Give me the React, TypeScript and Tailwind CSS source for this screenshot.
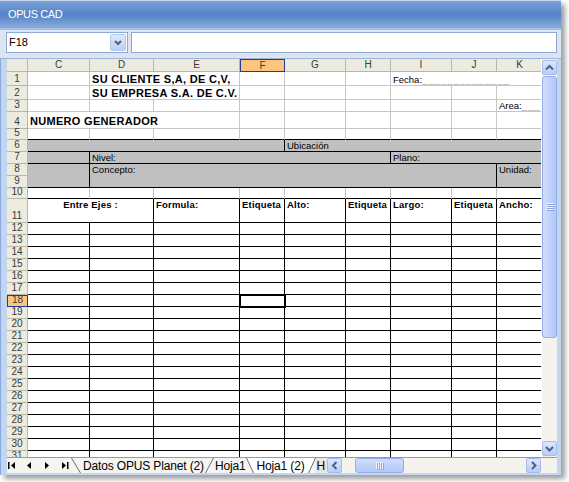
import React from 'react';

const font = "font-['Liberation_Sans',Arial,sans-serif]";

// cell border presets
const LIGHT = 'border-r border-b border-[#c6c6c6]';
const LIGHT_K = 'border-b border-[#c6c6c6]';
const LIGHT_BB = 'border-r border-b border-r-[#c6c6c6] border-b-black';
const LIGHT_BB_K = 'border-b border-b-black';
const BLACK = 'border-r border-b border-black';
const BLACK_K = 'border-b border-black';
const GRAY = 'bg-[#c0c0c0] border-r border-b border-black';
const GRAY_K = 'bg-[#c0c0c0] border-b border-black';

const txt = 'text-[9.5px] leading-none text-black';
const title = 'text-[11px] font-bold tracking-[0.3px] leading-none text-black';
const head = 'text-[9.5px] font-bold tracking-[0.2px] leading-none text-black';
const blank = 'text-[#a6a6a6] tracking-[1px]';

const cols = ['C', 'D', 'E', 'F', 'G', 'H', 'I', 'J', 'K'];
const bodyRows = Array.from({ length: 20 }, (_, i) => i + 12);

const Cell: React.FC<{ cls: string; children?: React.ReactNode }> = ({ cls, children }) => (
    <div className={`flex overflow-hidden whitespace-nowrap ${cls}`}>{children}</div>
);

const RowHead: React.FC<{ n: number; sel?: boolean }> = ({ n, sel }) => (
    <div
        className={`flex items-end justify-center pb-px text-[10px] leading-none text-[#3a3a3a] ${
            sel ? 'bg-[#fcc57d] border border-[#1f3d98]' : 'bg-[#ecebe0] border-r border-b border-[#b9b7a8]'
        }`}
    >
        {n}
    </div>
);

const ArrowBtn: React.FC<{ dir: 'up' | 'down' | 'left' | 'right' }> = ({ dir }) => {
    const d = {
        up: 'M4 9.5 L7.5 6 L11 9.5',
        down: 'M4 6 L7.5 9.5 L11 6',
        left: 'M9.5 4 L6 7.5 L9.5 11',
        right: 'M6 4 L9.5 7.5 L6 11',
    }[dir];
    return (
        <div className="w-[15px] h-[15px] shrink-0 rounded-[2px] border border-[#a5bbec] bg-gradient-to-b from-[#dde7fe] to-[#b8ccf8] flex items-center justify-center">
            <svg width="13" height="13" viewBox="1 1 13 13">
                <path d={d} fill="none" stroke="#4d6185" strokeWidth="2" />
            </svg>
        </div>
    );
};

const Spreadsheet: React.FC = () => (
    <div className="w-[536px] h-[398px] overflow-hidden bg-white">
        <div className="grid grid-cols-[21px_62px_64px_86px_45px_61px_45px_61px_45px_46px] grid-rows-[13px_14px_14px_12px_17px_11px_12px_12px_12px_12px_11px_24px_repeat(20,12px)]">
            {/* column headers */}
            <div className="bg-[#ecebe0] border-r border-b border-[#b9b7a8]" />
            {cols.map((c) => (
                <div
                    key={c}
                    className={`flex items-center justify-center text-[10px] leading-none text-[#3a3a3a] ${
                        c === 'F'
                            ? 'bg-[#fcc57d] border border-[#1f3d98]'
                            : 'bg-[#ecebe0] border-r border-b border-[#b9b7a8]'
                    }`}
                >
                    {c}
                </div>
            ))}

            {/* 1 */}
            <RowHead n={1} />
            <Cell cls={LIGHT} />
            <Cell cls={`col-span-2 items-end pl-[2px] ${LIGHT}`}>
                <span className={title}>SU CLIENTE S,A, DE C,V,</span>
            </Cell>
            <Cell cls={LIGHT} />
            <Cell cls={LIGHT} />
            <Cell cls={LIGHT} />
            <Cell cls={`col-span-3 items-end pl-[2px] pb-px ${LIGHT_K}`}>
                <span className={txt}>
                    Fecha:<span className={blank}>______________</span>
                </span>
            </Cell>

            {/* 2 */}
            <RowHead n={2} />
            <Cell cls={LIGHT} />
            <Cell cls={`col-span-2 items-end pl-[2px] ${LIGHT}`}>
                <span className={title}>SU EMPRESA S.A. DE C.V.</span>
            </Cell>
            <Cell cls={LIGHT} />
            <Cell cls={LIGHT} />
            <Cell cls={LIGHT} />
            <Cell cls={LIGHT} />
            <Cell cls={LIGHT} />
            <Cell cls={LIGHT_K} />

            {/* 3 */}
            <RowHead n={3} />
            {cols.slice(0, 8).map((c) => (
                <Cell key={c} cls={LIGHT} />
            ))}
            <Cell cls={`items-end pl-[2px] pb-px ${LIGHT_K}`}>
                <span className={txt}>
                    Area:<span className={blank}>___</span>
                </span>
            </Cell>

            {/* 4 */}
            <RowHead n={4} />
            <Cell cls={`col-span-3 items-end pl-[2px] pb-px ${LIGHT}`}>
                <span className={title}>NUMERO GENERADOR</span>
            </Cell>
            {cols.slice(3, 8).map((c) => (
                <Cell key={c} cls={LIGHT} />
            ))}
            <Cell cls={LIGHT_K} />

            {/* 5 */}
            <RowHead n={5} />
            {cols.slice(0, 8).map((c) => (
                <Cell key={c} cls={LIGHT_BB} />
            ))}
            <Cell cls={LIGHT_BB_K} />

            {/* 6 */}
            <RowHead n={6} />
            <Cell cls={`col-span-4 ${GRAY}`} />
            <Cell cls={`col-span-5 items-end pl-[2px] pb-px ${GRAY_K}`}>
                <span className={txt}>Ubicación</span>
            </Cell>

            {/* 7 */}
            <RowHead n={7} />
            <Cell cls={GRAY} />
            <Cell cls={`col-span-5 items-end pl-[2px] pb-px ${GRAY}`}>
                <span className={txt}>Nivel:</span>
            </Cell>
            <Cell cls={`col-span-3 items-end pl-[2px] pb-px ${GRAY_K}`}>
                <span className={txt}>Plano:</span>
            </Cell>

            {/* 8-9 */}
            <RowHead n={8} />
            <Cell cls={`row-span-2 ${GRAY}`} />
            <Cell cls={`col-span-7 row-span-2 items-start pl-[2px] pt-[1px] ${GRAY}`}>
                <span className={txt}>Concepto:</span>
            </Cell>
            <Cell cls={`row-span-2 items-start pl-[2px] pt-[1px] ${GRAY_K}`}>
                <span className={txt}>Unidad:</span>
            </Cell>
            <RowHead n={9} />

            {/* 10 */}
            <RowHead n={10} />
            {cols.slice(0, 8).map((c) => (
                <Cell key={c} cls={LIGHT_BB} />
            ))}
            <Cell cls={LIGHT_BB_K} />

            {/* 11 */}
            <RowHead n={11} />
            <Cell cls={`col-span-2 items-start justify-center pt-px ${BLACK}`}>
                <span className={head}>Entre Ejes :</span>
            </Cell>
            {['Formula:', 'Etiqueta', 'Alto:', 'Etiqueta', 'Largo:', 'Etiqueta'].map((h, i) => (
                <Cell key={i} cls={`items-start pl-[2px] pt-px ${BLACK}`}>
                    <span className={head}>{h}</span>
                </Cell>
            ))}
            <Cell cls={`items-start pl-[2px] pt-px ${BLACK_K}`}>
                <span className={head}>Ancho:</span>
            </Cell>

            {/* 12-31 */}
            {bodyRows.map((r) => (
                <React.Fragment key={r}>
                    <RowHead n={r} sel={r === 18} />
                    {cols.map((c) => (
                        <div key={c} className={`relative ${c === 'K' ? BLACK_K : BLACK}`}>
                            {r === 18 && c === 'F' && (
                                <div className="absolute -left-px -top-px w-[47px] h-[14px] border border-black bg-white">
                                    <div className="w-full h-full border border-black" />
                                </div>
                            )}
                        </div>
                    ))}
                </React.Fragment>
            ))}
        </div>
    </div>
);

const VScroll: React.FC = () => (
    <div className="w-[15px] h-[398px] flex flex-col items-center bg-[#f4f3ee] pt-px pb-px">
        <ArrowBtn dir="up" />
        <div className="mt-px w-[15px] h-[262px] rounded-[3px] border border-[#94aee8] bg-gradient-to-r from-[#cfdcfd] to-[#b3c8f6] flex items-center justify-center">
            <svg width="8" height="8" viewBox="0 0 8 8">
                {[0, 2, 4, 6].map((y) => (
                    <React.Fragment key={y}>
                        <rect x="0" y={y} width="7" height="1" fill="#eef3fe" />
                        <rect x="1" y={y + 1} width="7" height="1" fill="#8ca7e0" />
                    </React.Fragment>
                ))}
            </svg>
        </div>
        <div className="flex-1" />
        <ArrowBtn dir="down" />
    </div>
);

const NavArrows: React.FC = () => (
    <svg width="64" height="15" viewBox="0 0 64 15" className="shrink-0">
        <rect x="1" y="4" width="1.5" height="7" fill="#000" />
        <polygon points="8,4 4,7.5 8,11" fill="#000" />
        <polygon points="24,4 20,7.5 24,11" fill="#000" />
        <polygon points="38,4 42,7.5 38,11" fill="#000" />
        <polygon points="55,4 59,7.5 55,11" fill="#000" />
        <rect x="60" y="4" width="1.5" height="7" fill="#000" />
    </svg>
);

const Slant: React.FC<{ dir: 'back' | 'fwd'; w: number; fill?: boolean }> = ({ dir, w, fill }) => (
    <svg width={w} height="15" viewBox={`0 0 ${w} 15`} className="shrink-0">
        {fill && (
            <polygon
                points={dir === 'back' ? `0,0 ${w},0 ${w},15` : `0,0 ${w},0 0,15`}
                fill="#ffffff"
            />
        )}
        <line
            x1={0.5}
            y1={dir === 'back' ? 0 : 15}
            x2={w - 0.5}
            y2={dir === 'back' ? 15 : 0}
            stroke="#6e6e6e"
            strokeWidth="1"
        />
    </svg>
);

const TabBar: React.FC = () => (
    <div className="h-[16px] flex border-t border-[#9a9a9a] bg-[#f4f4f1]">
        <div className="w-[321px] h-[15px] flex items-center overflow-hidden whitespace-nowrap text-[12px] leading-none tracking-[-0.15px] text-black">
            <NavArrows />
            <Slant dir="back" w={10} />
            <span className="shrink-0 pl-[2px] pr-px">Datos OPUS Planet (2)</span>
            <Slant dir="fwd" w={9} />
            <span className="shrink-0 pl-px">Hoja1</span>
            <Slant dir="back" w={8} fill />
            <span className="shrink-0 h-full flex items-center bg-white pl-[3px] pr-[3px]">Hoja1 (2)</span>
            <Slant dir="fwd" w={8} fill />
            <span className="shrink-0 h-full flex items-center bg-[#e6e6e2] border-r border-[#9a9a9a] pl-px pr-[2px]">H</span>
        </div>
        <div className="w-[215px] h-[15px] flex items-center bg-[#f4f3ee]">
            <ArrowBtn dir="left" />
            <div className="ml-[13px] w-[49px] h-[15px] rounded-[3px] border border-[#94aee8] bg-gradient-to-b from-[#cfdcfd] to-[#b3c8f6] flex items-center justify-center">
                <svg width="8" height="8" viewBox="0 0 8 8">
                    {[0, 2, 4, 6].map((x) => (
                        <React.Fragment key={x}>
                            <rect x={x} y="0" width="1" height="7" fill="#eef3fe" />
                            <rect x={x + 1} y="1" width="1" height="7" fill="#8ca7e0" />
                        </React.Fragment>
                    ))}
                </svg>
            </div>
            <div className="flex-1" />
            <ArrowBtn dir="right" />
            <div className="w-px" />
        </div>
        <div className="w-[15px] h-[15px] bg-[#f4f3ee]" />
    </div>
);

const App: React.FC = () => (
    <div className={`w-[569px] h-[482px] bg-white ${font}`}>
        <div className="w-[561px] h-[475px] flex flex-col bg-[#c3d5ef] shadow-[4px_4px_5px_rgba(0,0,0,0.38)]">
            <div className="h-[28px] shrink-0 flex items-center pl-[8px] border-t border-[#c9d9f1] bg-gradient-to-b from-[#7ca2d9] via-[#5483c6] to-[#88abdd]">
                <span className="text-[11px] tracking-[-0.4px] text-white">OPUS CAD</span>
            </div>
            <div className="h-[31px] shrink-0 flex pl-[6px] pr-[4px] pt-[2px] border-t-2 border-[#a4bde3] border-b border-b-[#9db3d8] bg-[#dde5f0]">
                <div className="w-[122px] h-[21px] flex items-center border border-[#8ea9d6] bg-white">
                    <span className="flex-1 pl-[2px] text-[11px] text-black">F18</span>
                    <div className="w-[16px] h-[17px] mr-px rounded-[2px] border border-[#b5c8ef] bg-gradient-to-b from-[#e1e9fd] to-[#bccff7] flex items-center justify-center">
                        <svg width="10" height="8" viewBox="0 0 10 8">
                            <path d="M2 2 L5 5 L8 2" fill="none" stroke="#4d6185" strokeWidth="2" />
                        </svg>
                    </div>
                </div>
                <div className="ml-[3px] flex-1 h-[21px] border border-[#8ea9d6] bg-white" />
            </div>
            <div className="flex-1 flex flex-col pl-[6px] pr-[4px] pb-[2px] border-l border-[#88a9db]">
                <div className="flex gap-px bg-white">
                    <Spreadsheet />
                    <VScroll />
                </div>
                <TabBar />
            </div>
        </div>
    </div>
);

export default App;
